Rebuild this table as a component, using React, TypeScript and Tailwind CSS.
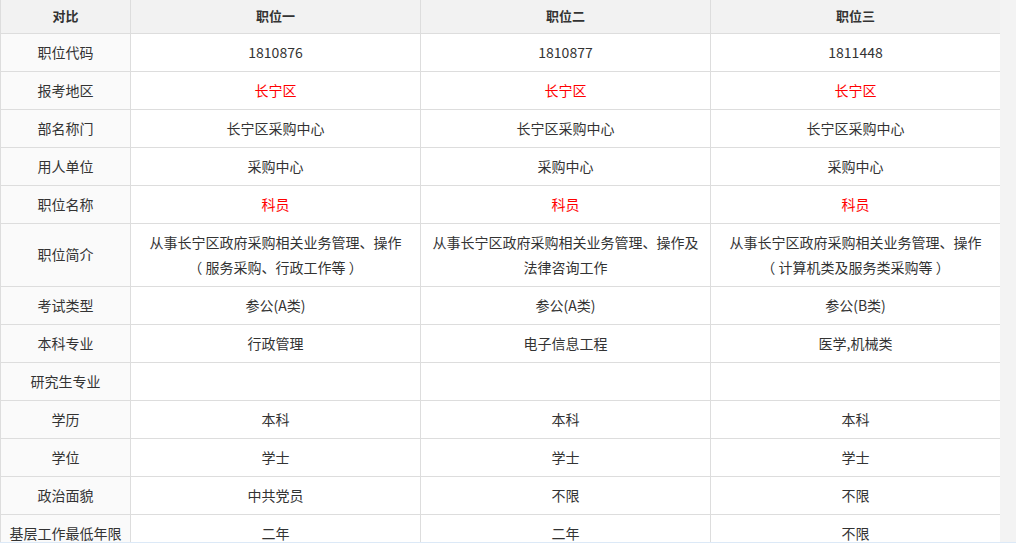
import React from 'react';

type Row = { label: string; values: string[]; red?: boolean };

const rows: Row[] = [
  { label: '职位代码', values: ['1810876', '1810877', '1811448'] },
  { label: '报考地区', values: ['长宁区', '长宁区', '长宁区'], red: true },
  { label: '部名称门', values: ['长宁区采购中心', '长宁区采购中心', '长宁区采购中心'] },
  { label: '用人单位', values: ['采购中心', '采购中心', '采购中心'] },
  { label: '职位名称', values: ['科员', '科员', '科员'], red: true },
  {
    label: '职位简介',
    values: [
      '从事长宁区政府采购相关业务管理、操作\n（ 服务采购、行政工作等 ）',
      '从事长宁区政府采购相关业务管理、操作及法律咨询工作',
      '从事长宁区政府采购相关业务管理、操作\n（ 计算机类及服务类采购等 ）',
    ],
  },
  { label: '考试类型', values: ['参公(A类)', '参公(A类)', '参公(B类)'] },
  { label: '本科专业', values: ['行政管理', '电子信息工程', '医学,机械类'] },
  { label: '研究生专业', values: ['', '', ''] },
  { label: '学历', values: ['本科', '本科', '本科'] },
  { label: '学位', values: ['学士', '学士', '学士'] },
  { label: '政治面貌', values: ['中共党员', '不限', '不限'] },
  { label: '基层工作最低年限', values: ['二年', '二年', '不限'] },
];

export default function App() {
  return (
    <div
      className="w-[1016px] h-[548px] overflow-hidden bg-white flex flex-col"
      style={{ fontFamily: '"Microsoft YaHei", "Noto Sans CJK SC", sans-serif' }}
    >
      <div className="flex h-[542px] overflow-hidden">
        <div className="w-[1000px] overflow-hidden">
          <table className="w-[1000px] table-fixed border-collapse text-[14px] text-[#333333]">
            <colgroup>
              <col className="w-[130px]" />
              <col className="w-[290px]" />
              <col className="w-[290px]" />
              <col className="w-[290px]" />
            </colgroup>
            <thead>
              <tr className="bg-[#f2f2f2]">
                {['对比', '职位一', '职位二', '职位三'].map((h) => (
                  <th
                    key={h}
                    className="h-[33px] border border-[#dddddd] border-t-0 px-2 text-center text-[13px] font-bold leading-[20px]"
                  >
                    {h}
                  </th>
                ))}
              </tr>
            </thead>
            <tbody>
              {rows.map((r) => (
                <tr key={r.label}>
                  <td className="h-[38px] border border-[#dddddd] bg-[#fafafa] px-1 py-[6px] text-center leading-[25px] whitespace-nowrap">
                    {r.label}
                  </td>
                  {r.values.map((v, i) => (
                    <td
                      key={i}
                      className={`h-[38px] border border-[#dddddd] px-2 py-[6px] text-center leading-[25px] whitespace-pre-line ${
                        r.red ? 'text-[#ff0000]' : ''
                      }`}
                    >
                      {v}
                    </td>
                  ))}
                </tr>
              ))}
            </tbody>
          </table>
        </div>
        <div className="flex-1 bg-[#f3f3f3]" />
      </div>
      <div className="h-px bg-[#dce9f7]" />
      <div className="flex-1 bg-white" />
    </div>
  );
}
